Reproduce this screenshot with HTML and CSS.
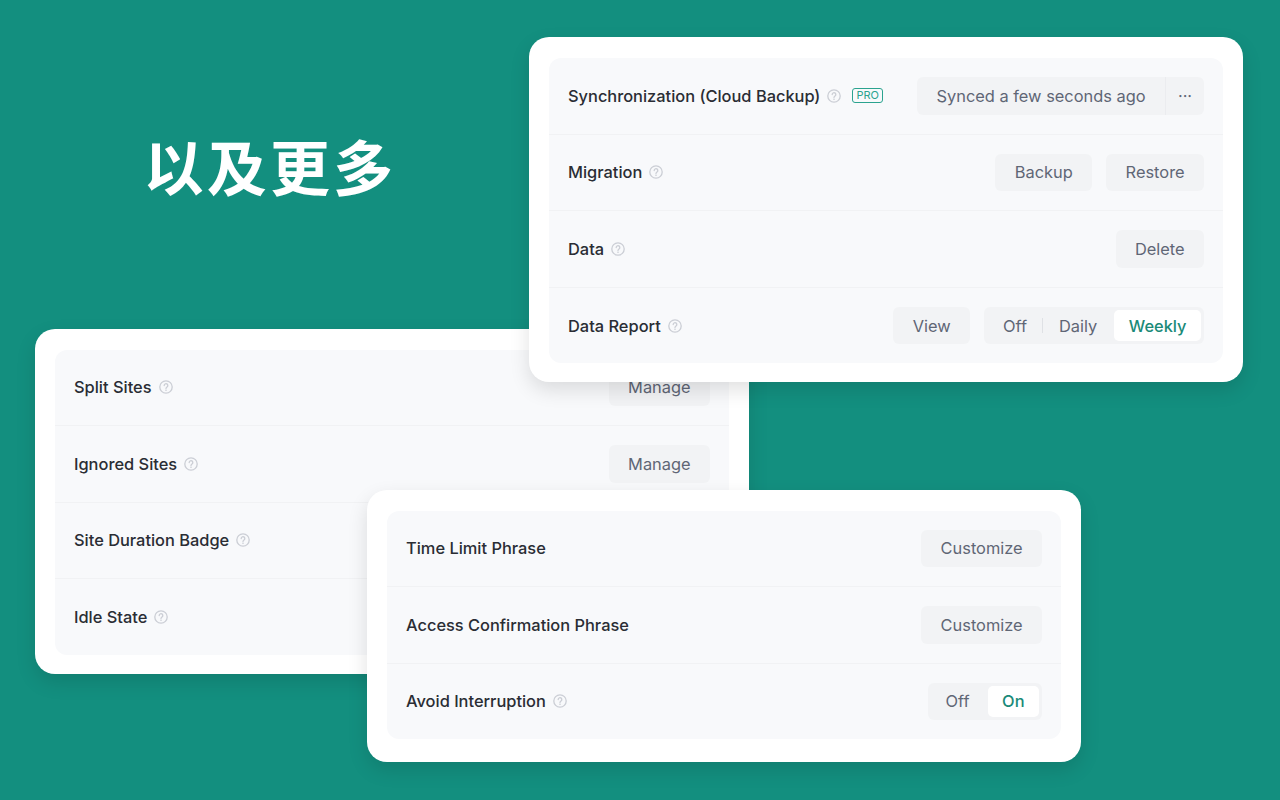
FILE: index.html
```html
<!DOCTYPE html>
<html lang="zh-CN">
<head>
    <meta charset="UTF-8">
    <meta name="viewport" content="width=device-width, initial-scale=1.0">
    <title>以及更多</title>
    <link rel="stylesheet" href="styles.css">
</head>
<body>
    <svg class="icon-defs" width="0" height="0">
        <symbol id="help" viewBox="0 0 14 14">
            <circle cx="7" cy="7" r="6.2" fill="none" stroke="currentColor" stroke-width="1.3"/>
            <path d="M5.2 5.5a1.8 1.8 0 1 1 2.8 1.5c-.6.4-1 .7-1 1.5" fill="none" stroke="currentColor" stroke-width="1.3" stroke-linecap="round"/>
            <circle cx="7" cy="10.3" r=".8" fill="currentColor"/>
        </symbol>
    </svg>

    <h1 class="headline">以及更多</h1>

    <div class="card card-sites">
        <div class="panel">
            <div class="row">
                <div class="label">Split Sites <svg class="help"><use href="#help"/></svg></div>
                <button class="btn">Manage</button>
            </div>
            <div class="row">
                <div class="label">Ignored Sites <svg class="help"><use href="#help"/></svg></div>
                <button class="btn">Manage</button>
            </div>
            <div class="row">
                <div class="label">Site Duration Badge <svg class="help"><use href="#help"/></svg></div>
            </div>
            <div class="row">
                <div class="label">Idle State <svg class="help"><use href="#help"/></svg></div>
            </div>
        </div>
    </div>

    <div class="card card-data">
        <div class="panel">
            <div class="row">
                <div class="label">Synchronization (Cloud Backup) <svg class="help"><use href="#help"/></svg> <span class="pro">PRO</span></div>
                <div class="btn-group">
                    <button class="btn">Synced a few seconds ago</button>
                    <button class="btn btn-more">···</button>
                </div>
            </div>
            <div class="row">
                <div class="label">Migration <svg class="help"><use href="#help"/></svg></div>
                <div class="actions">
                    <button class="btn">Backup</button>
                    <button class="btn">Restore</button>
                </div>
            </div>
            <div class="row">
                <div class="label">Data <svg class="help"><use href="#help"/></svg></div>
                <button class="btn">Delete</button>
            </div>
            <div class="row">
                <div class="label">Data Report <svg class="help"><use href="#help"/></svg></div>
                <div class="actions">
                    <button class="btn">View</button>
                    <div class="segment">
                        <span class="seg-item seg-split">Off</span>
                        <span class="seg-item seg-mid">Daily</span>
                        <span class="seg-item active">Weekly</span>
                    </div>
                </div>
            </div>
        </div>
    </div>

    <div class="card card-phrase">
        <div class="panel">
            <div class="row">
                <div class="label">Time Limit Phrase</div>
                <button class="btn">Customize</button>
            </div>
            <div class="row">
                <div class="label">Access Confirmation Phrase</div>
                <button class="btn">Customize</button>
            </div>
            <div class="row">
                <div class="label">Avoid Interruption <svg class="help"><use href="#help"/></svg></div>
                <div class="segment">
                    <span class="seg-item">Off</span>
                    <span class="seg-item active">On</span>
                </div>
            </div>
        </div>
    </div>
</body>
</html>
```

FILE: styles.css
```css
* {
    box-sizing: border-box;
}

body {
    margin: 0;
    width: 1280px;
    height: 800px;
    overflow: hidden;
    position: relative;
    background: #138f7f;
    font-family: Inter, 'Noto Sans CJK SC', sans-serif;
}

.icon-defs {
    position: absolute;
}

.headline {
    position: absolute;
    left: 143.5px;
    top: 120px;
    margin: 0;
    color: #fff;
    font-family: 'Noto Sans CJK SC', sans-serif;
    font-size: 60px;
    letter-spacing: 3.2px;
    line-height: 90px;
    font-weight: 700;
    white-space: nowrap;
}

/* windows */
.card {
    position: absolute;
    width: 714px;
    padding: 20.5px 20px 0;
    background: #fff;
    border-radius: 20px;
    box-shadow: 0 8px 20px rgba(0, 0, 0, 0.12);
}

.card-sites {
    left: 35px;
    top: 329px;
    height: 345px;
}

.card-data {
    left: 529px;
    top: 37px;
    height: 345px;
    padding-top: 21px;
}

.card-phrase {
    left: 367px;
    top: 490px;
    height: 272px;
}

.panel {
    background: #f8f9fb;
    border-radius: 12px;
}

.row {
    display: flex;
    align-items: center;
    justify-content: space-between;
    height: 76.6px;
    padding: 0 19px;
    border-bottom: 1px solid #f1f2f4;
}

.row:last-child {
    height: 75.6px;
    border-bottom: none;
}

.label {
    display: flex;
    align-items: center;
    gap: 7px;
    color: #2a2d34;
    font-size: 16.4px;
    font-weight: 500;
    white-space: nowrap;
}

.help {
    width: 14px;
    height: 14px;
    color: #cbced5;
}

.pro {
    margin-left: 4px;
    padding: 0 3px;
    height: 15px;
    line-height: 13px;
    color: #2ba38f;
    font-size: 11px;
    font-weight: 400;
    border: 1px solid #2ba38f;
    border-radius: 3px;
}

.actions {
    display: flex;
    align-items: center;
    gap: 14px;
}

.btn {
    height: 37.5px;
    padding: 0 19.4px;
    border: none;
    border-radius: 6px;
    background: #f2f3f5;
    color: #5f6675;
    font-family: inherit;
    font-size: 16.4px;
    white-space: nowrap;
}

.btn-group {
    display: flex;
}

.btn-group .btn {
    border-radius: 6px 0 0 6px;
}

.btn-group .btn-more {
    width: 39px;
    padding: 0;
    border-left: 1px solid #ebecef;
    border-radius: 0 6px 6px 0;
}

.segment {
    display: flex;
    align-items: center;
    height: 37.5px;
    padding: 3px;
    border-radius: 6px;
    background: #f2f3f5;
    color: #5f6675;
    font-size: 16.4px;
}

.seg-item {
    display: flex;
    align-items: center;
    height: 31px;
    padding: 0 18px 0 15px;
    position: relative;
}

.seg-split {
    padding: 0 16px;
}

.seg-mid {
    padding: 0 17px 0 16px;
}

.seg-split::after {
    content: '';
    position: absolute;
    right: 0;
    top: 8px;
    height: 15px;
    width: 1px;
    background: #dfe1e5;
}

.seg-item.active {
    padding: 0 14.5px;
    background: #fff;
    border-radius: 5px;
    color: #1a8a78;
    font-weight: 500;
}
```
